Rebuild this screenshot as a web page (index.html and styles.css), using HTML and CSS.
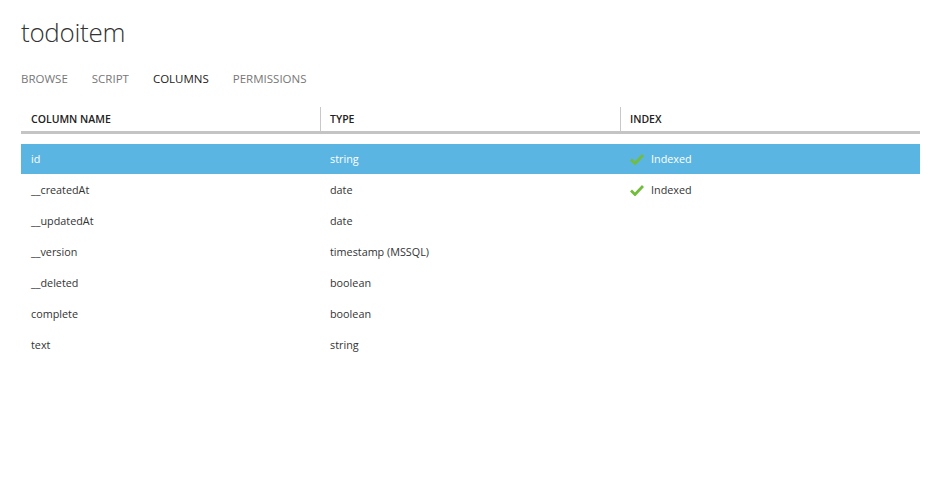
FILE: index.html
```html
<!DOCTYPE html>
<html>
<head>
<meta charset="utf-8">
<link rel="stylesheet" href="styles.css">
</head>
<body>
<div class="page">
  <h1 class="title">todoitem</h1>
  <nav class="tabs">
    <span class="tab">BROWSE</span>
    <span class="tab">SCRIPT</span>
    <span class="tab active">COLUMNS</span>
    <span class="tab">PERMISSIONS</span>
  </nav>
  <div class="table">
    <div class="head">
      <div class="hcell">COLUMN NAME</div>
      <div class="hcell sep">TYPE</div>
      <div class="hcell sep">INDEX</div>
    </div>
    <div class="rows">
      <div class="row selected">
        <div class="cell">id</div><div class="cell">string</div>
        <div class="cell idx"><svg class="check" width="14" height="11" viewBox="0 0 14 11"><path d="M1 5.5 L5 9.5 L13 1" fill="none" stroke="#72bd3a" stroke-width="2.8"/></svg>Indexed</div>
      </div>
      <div class="row">
        <div class="cell">__createdAt</div><div class="cell">date</div>
        <div class="cell idx"><svg class="check" width="14" height="11" viewBox="0 0 14 11"><path d="M1 5.5 L5 9.5 L13 1" fill="none" stroke="#72bd3a" stroke-width="2.8"/></svg>Indexed</div>
      </div>
      <div class="row"><div class="cell">__updatedAt</div><div class="cell">date</div><div class="cell"></div></div>
      <div class="row"><div class="cell">__version</div><div class="cell">timestamp (MSSQL)</div><div class="cell"></div></div>
      <div class="row"><div class="cell">__deleted</div><div class="cell">boolean</div><div class="cell"></div></div>
      <div class="row"><div class="cell">complete</div><div class="cell">boolean</div><div class="cell"></div></div>
      <div class="row"><div class="cell">text</div><div class="cell">string</div><div class="cell"></div></div>
    </div>
  </div>
</div>
</body>
</html>
```

FILE: styles.css
```css
html, body {
  margin: 0;
  padding: 0;
  background: #fff;
}
body {
  font-family: "Open Sans", "Noto Sans", sans-serif;
  color: #333;
}
.page {
  padding: 0 24px 0 21px;
}
.title {
  margin: 0;
  padding-top: 14px;
  font-size: 26px;
  font-weight: 300;
  line-height: 36px;
  color: #333;
  letter-spacing: -0.3px;
}
.tabs {
  display: flex;
  gap: 24px;
  margin-top: 20px;
  height: 18px;
  line-height: 18px;
}
.tab {
  font-size: 11.5px;
  color: #777;
}
.tab.active {
  color: #222;
}
.table {
  margin-top: 19px;
}
.head {
  display: grid;
  grid-template-columns: 299px 300px 1fr;
  border-bottom: 3px solid #c4c4c4;
}
.hcell {
  height: 24px;
  line-height: 24px;
  padding-left: 10px;
  font-size: 10.5px;
  font-weight: 600;
  color: #222;
}
.hcell.sep {
  border-left: 1px solid #c8c8c8;
  padding-left: 9px;
}
.rows {
  margin-top: 10px;
  display: flex;
  flex-direction: column;
  gap: 1px;
}
.row {
  display: grid;
  grid-template-columns: 299px 300px 1fr;
  height: 30px;
  line-height: 30px;
  font-size: 10.8px;
  color: #333;
}
.row.selected {
  background: #5bb5e3;
  color: #fff;
}
.cell {
  padding-left: 10px;
  white-space: nowrap;
}
.idx {
  display: flex;
  align-items: center;
  gap: 7px;
}
.check {
  display: block;
}
```
